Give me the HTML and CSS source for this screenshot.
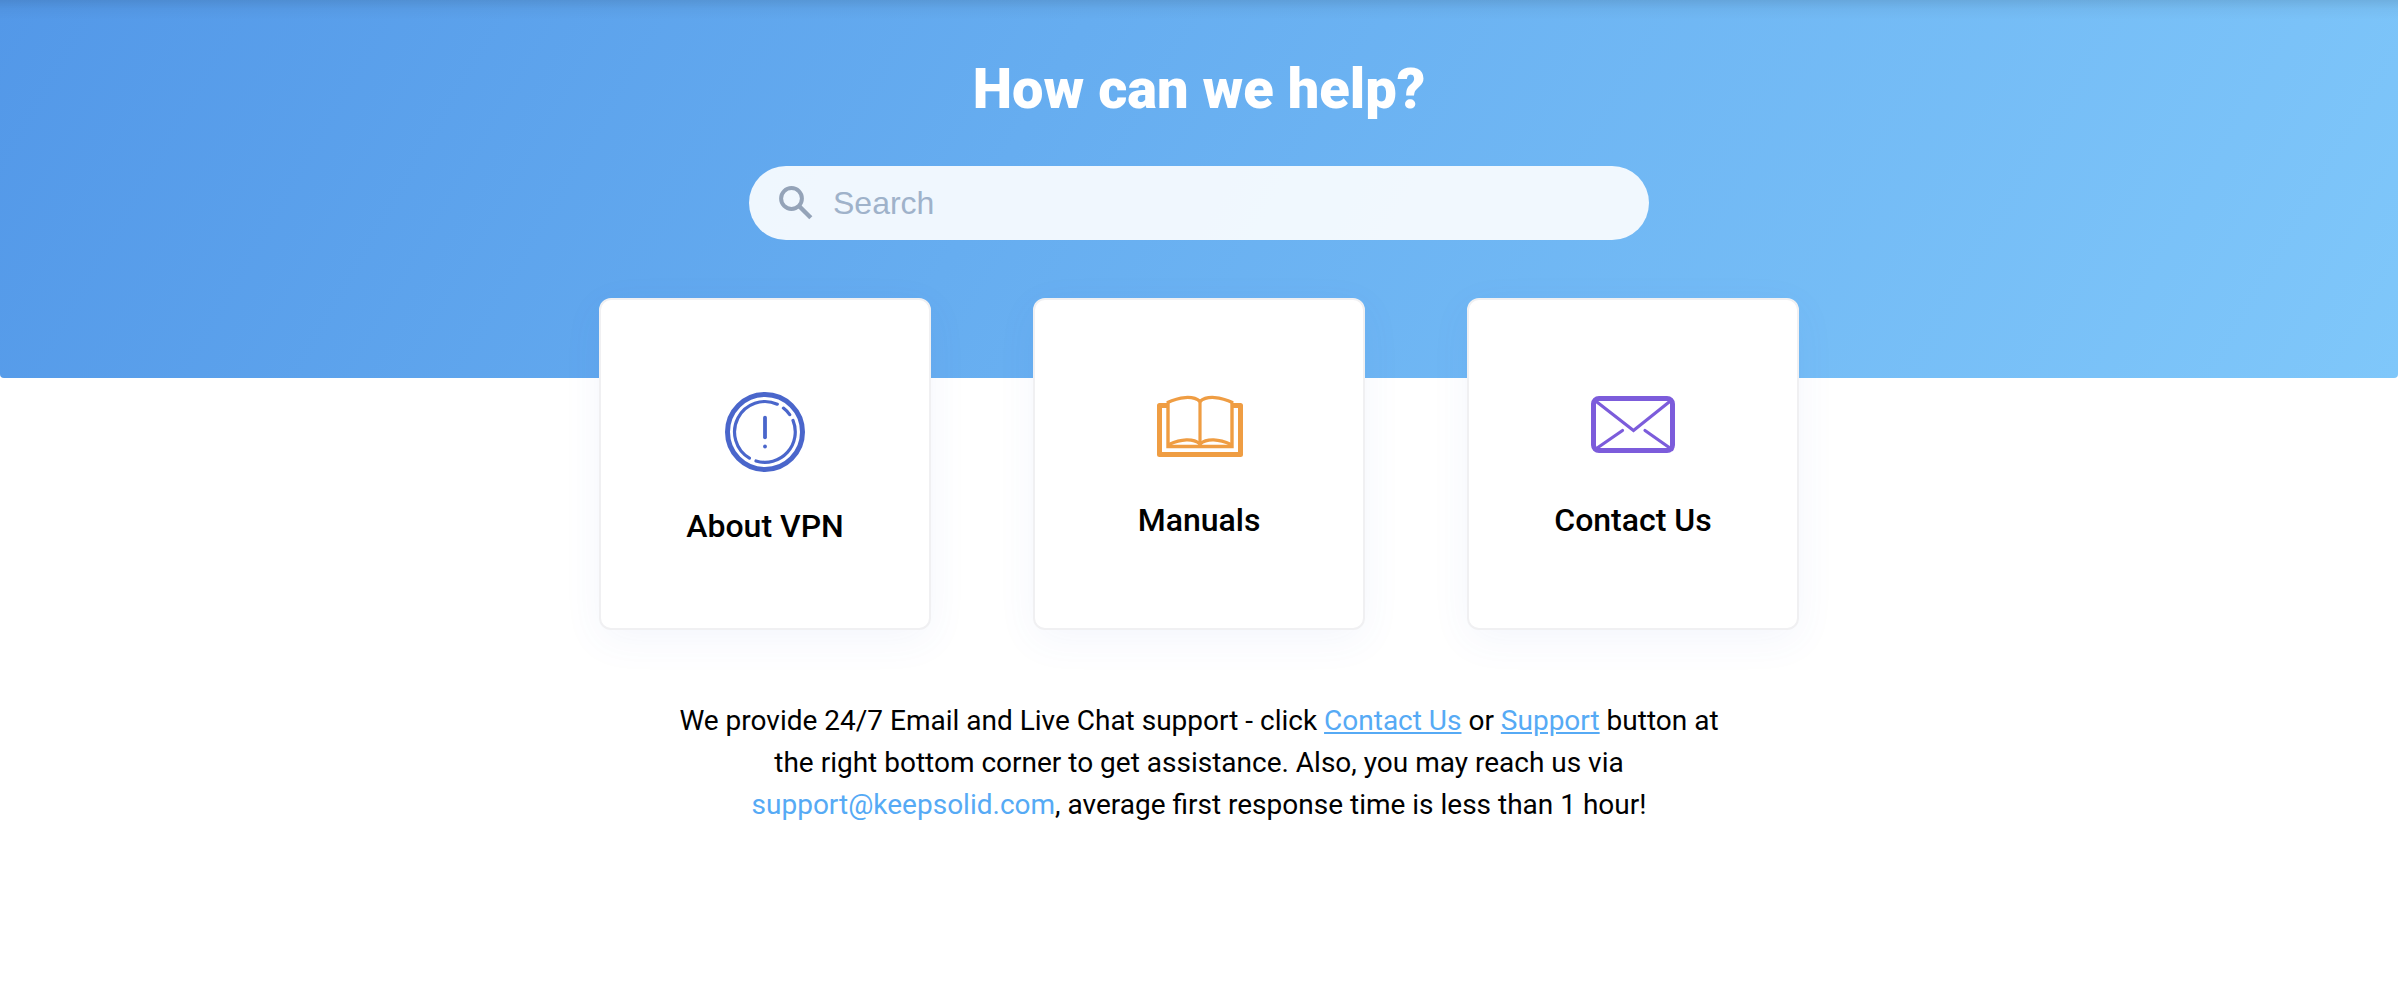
FILE: index.html
```html
<!DOCTYPE html>
<html lang="en">
<head>
<meta charset="utf-8">
<meta name="viewport" content="width=device-width, initial-scale=1">
<title>How can we help?</title>
<link rel="stylesheet" href="styles.css">
</head>
<body>
<header class="hero">
  <h1 class="hero-title">How can we help?</h1>
  <form class="search" role="search">
    <svg class="search-icon" viewBox="0 0 34 34" aria-hidden="true">
      <circle cx="12.500" cy="12.500" r="10.400" fill="none" stroke="#94a3b8" stroke-width="4"/>
      <path d="M20.500 20.500L31.800 31.800" fill="none" stroke="#94a3b8" stroke-width="4.400"/>
    </svg>
    <input class="search-input" type="search" placeholder="Search" aria-label="Search">
  </form>
</header>
<main class="content">
  <nav class="cards" aria-label="Help topics">
    <a class="card" href="#about">
      <svg class="icon-about" viewBox="0 0 80 80" fill="none" stroke="#4a66cb" stroke-linecap="round" aria-hidden="true">
        <circle cx="40" cy="40" r="37.500" stroke-width="5"/>
        <path d="M52.300 12.200A30.400 30.400 0 0 0 24.400 66.100M31 69A30.400 30.400 0 0 0 68 28.400M58.400 16.100Q62.200 19 64.700 22.600" stroke-width="3.200"/>
        <path d="M40 25.700V45.300" stroke-width="3.800"/>
        <circle cx="40" cy="54.500" r="1.900" fill="#4a66cb" stroke="none"/>
      </svg>
      <span class="card-label">About VPN</span>
    </a>
    <a class="card" href="#manuals">
      <svg class="icon-wide" viewBox="-1 2 86 68" fill="none" stroke="#ef9d43" aria-hidden="true">
        <path d="M11 9.500H2.500V58.500H83.500V9.500H75" stroke-width="5" stroke-linejoin="round"/>
        <path d="M11 6.500V50.500H75V6.500" stroke-width="3.400"/>
        <path d="M10 6.800C22 1 36 -1 43 5.500C50 -1 64 1 76 6.800" stroke-width="3.200"/>
        <path d="M43 5V50" stroke-width="3.200"/>
        <path d="M12 48.500C24 43 36 42 43 48C50 42 62 43 74 48.500" stroke-width="3.200"/>
      </svg>
      <span class="card-label">Manuals</span>
    </a>
    <a class="card" href="#contact">
      <svg class="icon-wide" viewBox="0 2 86 68" fill="none" stroke="#7c5cdb" aria-hidden="true">
        <rect x="3.500" y="2.500" width="79" height="52" rx="5.500" stroke-width="5"/>
        <path d="M5 4.500L43.500 34.500L81 4.500M5 53.500L32.500 34.500M82 53.500L55 34.500" stroke-width="3.200" stroke-linecap="round"/>
      </svg>
      <span class="card-label">Contact Us</span>
    </a>
  </nav>
  <p class="note">We provide 24/7 Email and Live Chat support - click <a class="link" href="#contact">Contact Us</a> or <a class="link" href="#support">Support</a> button at the right bottom corner to get assistance. Also, you may reach us via <a class="link link-plain" href="mailto:support@keepsolid.com">support@keepsolid.com</a>, average first response time is less than 1 hour!</p>
</main>
</body>
</html>
```
FILE: styles.css
```css
* {
  box-sizing: border-box;
}

body {
  margin: 0;
  background: #fff;
  color: #000;
  font-family: Roboto, "Liberation Sans", sans-serif;
}

.hero {
  display: flex;
  flex-direction: column;
  align-items: center;
  padding: 55px 32px 138px;
  border-radius: 0 0 4px 4px;
  background:
    linear-gradient(180deg, rgba(0, 0, 0, 0.1) 0, rgba(0, 0, 0, 0.03) 9px, rgba(0, 0, 0, 0) 20px),
    linear-gradient(120deg, #5398e8 0%, #66adf0 42%, #7fc7fa 100%);
}

.hero-title {
  margin: 0 0 43px;
  color: #fff;
  font-size: 56px;
  font-weight: 900;
  line-height: 68px;
  text-align: center;
}

.search {
  display: flex;
  align-items: center;
  gap: 20px;
  width: 100%;
  max-width: 900px;
  height: 74px;
  padding: 0 30px;
  border-radius: 37px;
  background: rgba(255, 255, 255, 0.9);
}

.search-icon {
  flex: none;
  width: 34px;
  height: 34px;
}

.search-input {
  flex: 1;
  min-width: 0;
  padding: 0;
  border: 0;
  outline: 0;
  background: transparent;
  color: #334155;
  font-family: "Liberation Sans", Arial, sans-serif;
  font-size: 32px;
}

.search-input::placeholder {
  color: #9fb2ca;
  opacity: 1;
}

.content {
  display: flex;
  flex-direction: column;
  align-items: center;
  padding: 0 32px 64px;
}

.cards {
  display: flex;
  flex-wrap: wrap;
  justify-content: center;
  gap: 32px 102px;
  margin-top: -80px;
}

.card {
  display: flex;
  flex-direction: column;
  align-items: center;
  justify-content: center;
  gap: 34px;
  width: 332px;
  height: 332px;
  padding-top: 10px;
  border: 2px solid #f0f0f2;
  border-radius: 12px;
  background: #fff;
  box-shadow: 0 10px 40px rgba(74, 102, 203, 0.06);
  color: #000;
  text-decoration: none;
}

.icon-about {
  width: 80px;
  height: 80px;
}

.icon-wide {
  width: 86px;
  height: 68px;
  overflow: visible;
}

.card-label {
  font-size: 32px;
  font-weight: 500;
  line-height: 40px;
}

.note {
  max-width: 1080px;
  margin: 70px 0 0;
  font-size: 28px;
  line-height: 42px;
  text-align: center;
}

.link {
  color: #56aaf5;
  text-decoration: underline;
}

.link-plain {
  text-decoration: none;
}
```
